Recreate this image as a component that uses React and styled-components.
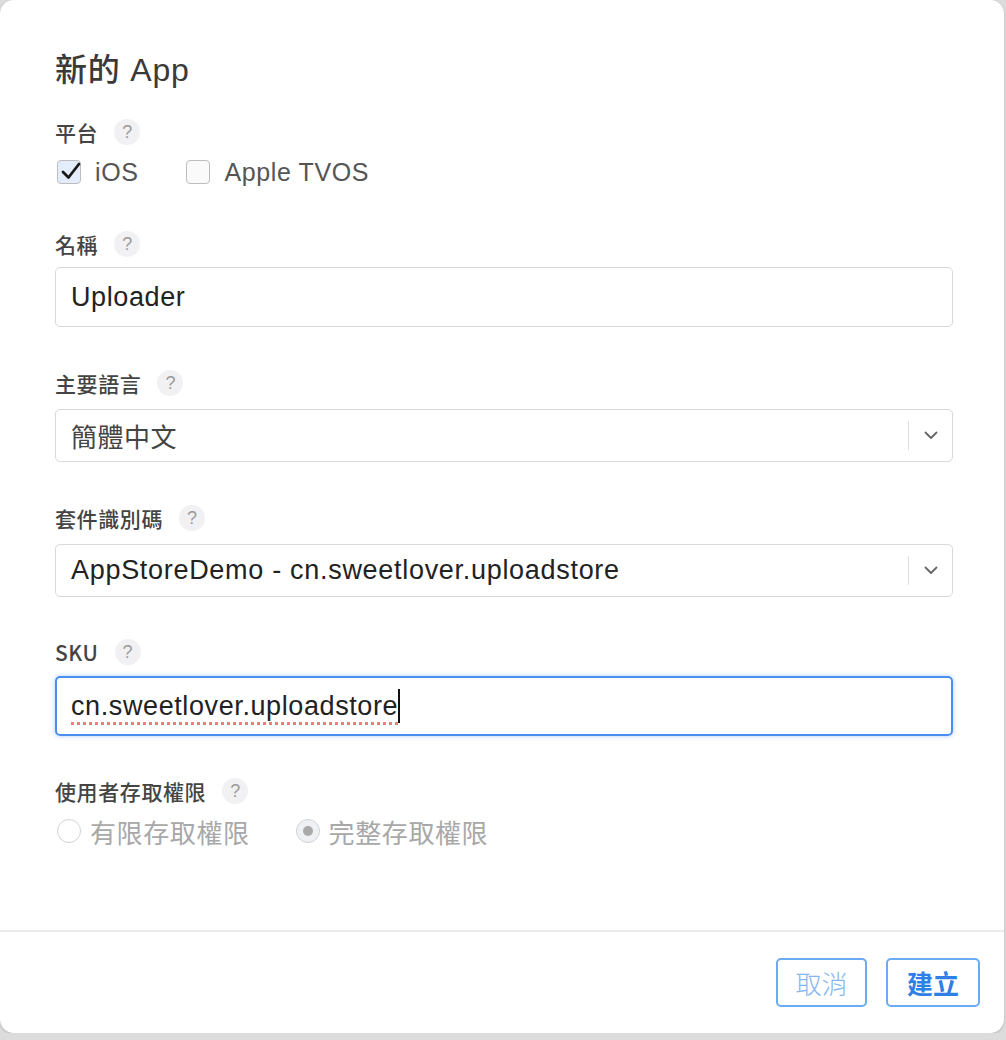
import React from 'react';
import styled, { createGlobalStyle } from 'styled-components';

const GlobalStyle = createGlobalStyle`
  html, body {
    margin: 0;
    padding: 0;
    background: #dcdcdc;
  }
  body {
    font-family: "Liberation Sans", "Noto Sans CJK TC", sans-serif;
  }
`;

const Dialog = styled.div`
  width: 1004px;
  height: 1033px;
  background: #fff;
  border-radius: 14px;
  box-shadow: 0 1px 3px rgba(0, 0, 0, 0.18);
  display: flex;
  flex-direction: column;
  overflow: hidden;
`;

const Body = styled.div`
  flex: 1;
  padding: 52px 51px 0 55px;
  display: flex;
  flex-direction: column;
`;

const Title = styled.h1`
  margin: 0;
  font-size: 32px;
  line-height: 36px;
  font-weight: 500;
  letter-spacing: 0.8px;
  color: #3a3a3a;
  font-family: "Liberation Sans", "Noto Sans CJK TC", sans-serif;
`;

const Field = styled.div`
  display: flex;
  flex-direction: column;
  margin-top: ${(p) => p.$top || 43}px;
`;

const LabelRow = styled.div`
  display: flex;
  align-items: center;
  height: 26px;
  gap: 16px;
  margin-bottom: ${(p) => p.$gap || 12}px;
`;

const Label = styled.span`
  font-family: "Noto Sans CJK TC", sans-serif;
  font-size: 21px;
  font-weight: 500;
  letter-spacing: 0.6px;
  color: #444;
  line-height: 26px;
`;

const Help = styled.span`
  width: 26px;
  height: 26px;
  border-radius: 50%;
  background: #f1f1f3;
  color: #9a9a9a;
  font-size: 18px;
  display: flex;
  align-items: center;
  justify-content: center;
  font-family: "Liberation Sans", sans-serif;
`;

const OptionRow = styled.div`
  display: flex;
  align-items: center;
  height: 26px;
  gap: ${(p) => p.$gap}px;
`;

const Option = styled.label`
  display: flex;
  align-items: center;
  gap: ${(p) => p.$gap || 14}px;
  font-size: ${(p) => p.$size || 25}px;
  letter-spacing: 0.6px;
  color: ${(p) => (p.$disabled ? '#a8a8a8' : '#555')};
  padding-left: 2px;
`;

const Box = styled.span`
  position: relative;
  width: 24px;
  height: 24px;
  box-sizing: border-box;
  border-radius: 4px;
  border: 1px solid #bdbdbd;
  background: ${(p) => (p.$checked ? '#e3edfb' : '#fafafa')};
  svg {
    position: absolute;
    left: 2px;
    top: -1px;
  }
`;

const Radio = styled.span`
  width: 24px;
  height: 24px;
  box-sizing: border-box;
  border-radius: 50%;
  border: 1px solid #d2d2d2;
  background: ${(p) => (p.$checked ? '#eef0f4' : '#fff')};
  display: flex;
  align-items: center;
  justify-content: center;
  &::after {
    content: '';
    display: ${(p) => (p.$checked ? 'block' : 'none')};
    width: 10px;
    height: 10px;
    border-radius: 50%;
    background: #a9a9a9;
  }
`;

const Input = styled.div`
  height: ${(p) => p.$h || 60}px;
  box-sizing: border-box;
  border-radius: 5px;
  border: ${(p) => (p.$focus ? '2px solid #4a8ff0' : '1px solid #d9d9d9')};
  box-shadow: ${(p) => (p.$focus ? '0 0 5px rgba(74, 143, 240, 0.45)' : 'none')};
  display: flex;
  align-items: center;
  padding-left: ${(p) => (p.$focus ? 14 : 15)}px;
  font-size: 27px;
  letter-spacing: 0.6px;
  color: #222;
`;

const SelectText = styled.span`
  flex: 1;
  color: ${(p) => (p.$cjk ? '#444' : '#222')};
  font-size: ${(p) => (p.$cjk ? 26 : 27)}px;
  letter-spacing: ${(p) => (p.$cjk ? 0.5 : 0.7)}px;
`;

const Divider = styled.span`
  width: 1px;
  height: 29px;
  background: #e0e0e0;
`;

const Chevron = styled.span`
  width: 43px;
  display: flex;
  justify-content: center;
`;

const Typed = styled.span`
  position: relative;
  text-decoration: underline dotted #f07a7a;
  text-decoration-thickness: 3px;
  text-underline-offset: 7px;
  &::after {
    content: '';
    position: absolute;
    right: -2px;
    top: -2px;
    width: 2px;
    height: 34px;
    background: #111;
  }
`;

const Footer = styled.div`
  height: 103px;
  border-top: 2px solid #ebebeb;
  display: flex;
  justify-content: flex-end;
  align-items: flex-start;
  padding: 26px 24px 0 0;
  gap: 19px;
  box-sizing: border-box;
`;

const Button = styled.button`
  height: 49px;
  width: ${(p) => p.$w}px;
  border-radius: 5px;
  border: 2px solid #6aabf3;
  background: #fff;
  font-size: 26px;
  font-family: "Noto Sans CJK TC", sans-serif;
  font-weight: ${(p) => (p.$primary ? 700 : 300)};
  color: ${(p) => (p.$primary ? '#2f7fe6' : '#86b6ee')};
  display: flex;
  align-items: center;
  justify-content: center;
  padding: 0;
`;

const Check = () => (
  <svg width="22" height="22" viewBox="0 0 22 22">
    <path d="M3 12 L8.5 17.5 L19 4" fill="none" stroke="#1a1a1a" strokeWidth="2.8" strokeLinecap="round" strokeLinejoin="round" />
  </svg>
);

const Down = () => (
  <svg width="14" height="9" viewBox="0 0 14 9">
    <path d="M1.5 1.5 L7 7 L12.5 1.5" fill="none" stroke="#666" strokeWidth="1.8" strokeLinecap="round" strokeLinejoin="round" />
  </svg>
);

function FieldLabel({ text, gap }) {
  return (
    <LabelRow $gap={gap}>
      <Label>{text}</Label>
      <Help>?</Help>
    </LabelRow>
  );
}

function Select({ value, cjk }) {
  return (
    <Input $h={53}>
      <SelectText $cjk={cjk}>{value}</SelectText>
      <Divider />
      <Chevron>
        <Down />
      </Chevron>
    </Input>
  );
}

export default function App() {
  return (
    <>
      <GlobalStyle />
      <Dialog>
        <Body>
          <Title>新的 App</Title>

          <Field $top={31}>
            <FieldLabel text="平台" gap={14} />
            <OptionRow $gap={46}>
              <Option>
                <Box $checked>
                  <Check />
                </Box>
                iOS
              </Option>
              <Option>
                <Box />
                Apple TVOS
              </Option>
            </OptionRow>
          </Field>

          <Field $top={46}>
            <FieldLabel text="名稱" gap={10} />
            <Input>Uploader</Input>
          </Field>

          <Field>
            <FieldLabel text="主要語言" gap={13} />
            <Select value="簡體中文" cjk />
          </Field>

          <Field>
            <FieldLabel text="套件識別碼" gap={13} />
            <Select value="AppStoreDemo - cn.sweetlover.uploadstore" />
          </Field>

          <Field $top={42}>
            <FieldLabel text="SKU" gap={11} />
            <Input $focus>
              <Typed>cn.sweetlover.uploadstore</Typed>
            </Input>
          </Field>

          <Field $top={42}>
            <FieldLabel text="使用者存取權限" gap={14} />
            <OptionRow $gap={44}>
              <Option $disabled $size={26} $gap={9}>
                <Radio />
                有限存取權限
              </Option>
              <Option $disabled $size={26} $gap={9}>
                <Radio $checked />
                完整存取權限
              </Option>
            </OptionRow>
          </Field>
        </Body>

        <Footer>
          <Button $w={91}>取消</Button>
          <Button $w={94} $primary>建立</Button>
        </Footer>
      </Dialog>
    </>
  );
}
